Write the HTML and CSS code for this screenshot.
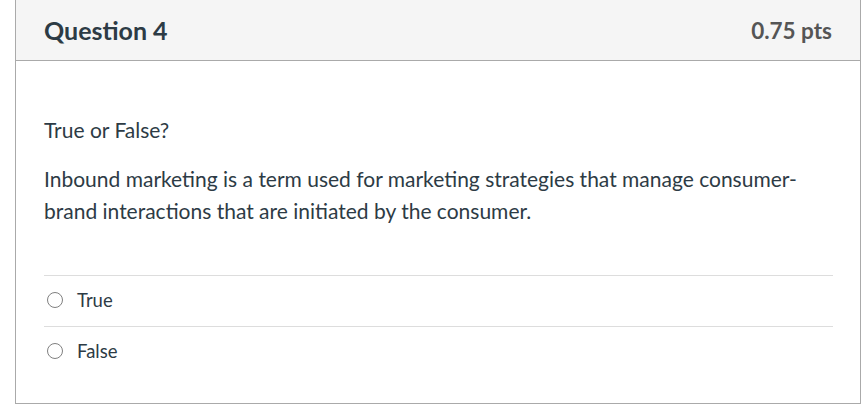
FILE: index.html
```html
<!DOCTYPE html>
<html>
<head>
<meta charset="utf-8">
<link rel="stylesheet" href="styles.css">
</head>
<body>
<div class="question">
  <div class="header">
    <h2 class="title">Question 4</h2>
    <span class="points">0.75 pts</span>
  </div>
  <div class="content">
    <p class="text">True or False?</p>
    <p class="text">Inbound marketing is a term used for marketing strategies that manage consumer-brand interactions that are initiated by the consumer.</p>
    <div class="answers">
      <label class="answer"><span class="radio"></span><span class="label">True</span></label>
      <label class="answer"><span class="radio"></span><span class="label">False</span></label>
    </div>
  </div>
</div>
</body>
</html>
```

FILE: styles.css
```css
html, body {
  margin: 0;
  padding: 0;
  background: #ffffff;
}
body {
  font-family: Lato, "Liberation Sans", sans-serif;
  color: #2d3b45;
}
.question {
  margin-left: 15px;
  width: 844px;
  border: 1px solid #aaaaaa;
  border-top: none;
  height: 403px;
  box-sizing: content-box;
}
.header {
  background: #f5f5f5;
  border-bottom: 1px solid #aaaaaa;
  height: 60px;
  display: flex;
  align-items: center;
  justify-content: space-between;
  padding: 0 28px;
}
.title {
  margin: 0;
  font-size: 25px;
  font-weight: 700;
  color: #2d3b45;
}
.points {
  font-size: 22.5px;
  font-weight: 700;
  color: #555555;
}
.content {
  padding: 53px 27px 0 28px;
}
.text {
  margin: 0 0 16px;
  font-size: 21px;
  line-height: 32.5px;
}
.answers {
  margin-top: 47px;
}
.answer {
  display: flex;
  align-items: center;
  gap: 14px;
  border-top: 1px solid #dddddd;
  box-sizing: border-box;
  height: 51px;
  padding: 0 0 2px 3px;
  font-size: 18.5px;
}
.radio {
  width: 14px;
  height: 14px;
  border: 1px solid #808080;
  border-radius: 50%;
}
```
